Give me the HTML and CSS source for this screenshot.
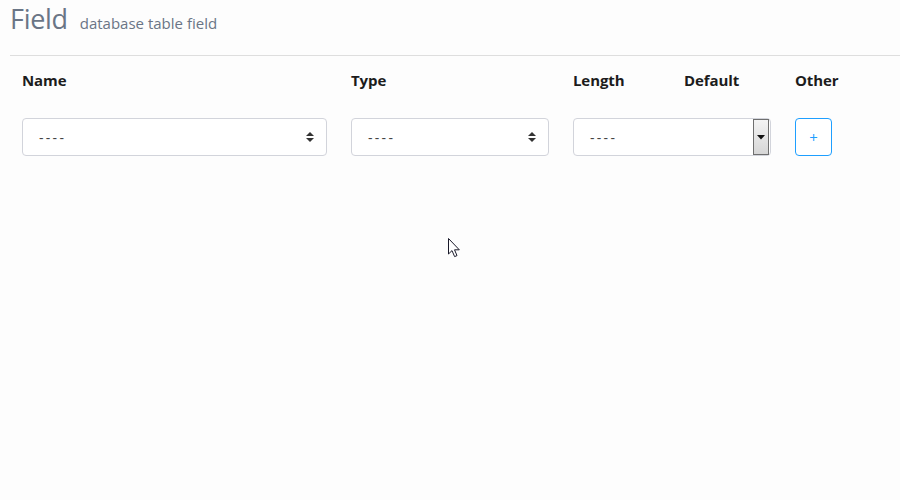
FILE: index.html
```html
<!DOCTYPE html>
<html>
<head>
<meta charset="utf-8">
<link rel="stylesheet" href="styles.css">
</head>
<body>
<div class="page">
  <div class="heading">
    <h1 class="title">Field</h1>
    <span class="subtitle">database table field</span>
  </div>
  <div class="fields">
    <div class="col-head">Name</div>
    <div class="col-head">Type</div>
    <div class="col-head">Length</div>
    <div class="col-head">Default</div>
    <div class="col-head">Other</div>

    <div class="select">
      <span class="select-text">----</span>
      <svg class="updown" width="8" height="12" viewBox="0 0 8 12"><path d="M4 1 L8 5 H0 Z M0 7 H8 L4 11 Z" fill="#333"/></svg>
    </div>
    <div class="select">
      <span class="select-text">----</span>
      <svg class="updown" width="8" height="12" viewBox="0 0 8 12"><path d="M4 1 L8 5 H0 Z M0 7 H8 L4 11 Z" fill="#333"/></svg>
    </div>
    <div class="select select-wide">
      <span class="select-text">----</span>
      <span class="dropbtn"><svg width="8" height="5" viewBox="0 0 8 5"><path d="M0 0 H8 L4 4.5 Z" fill="#111"/></svg></span>
    </div>
    <div class="add-cell"><button class="add-btn">+</button></div>
  </div>
</div>
<svg class="cursor" width="13" height="20" viewBox="0 0 13 20"><path d="M0.5 0.5 V16 L4 12.6 L6.6 18.6 L9 17.6 L6.5 11.8 H11.3 Z" fill="#fff" stroke="#1a1a2a" stroke-width="1" stroke-linejoin="round"/></svg>
</body>
</html>
```

FILE: styles.css
```css
html, body {
  margin: 0;
  padding: 0;
  background: #fdfdfd;
}
body {
  font-family: "Open Sans", "Noto Sans", "Liberation Sans", sans-serif;
  color: #222;
  width: 900px;
  height: 500px;
  overflow: hidden;
  position: relative;
}
.page {
  padding-left: 10px;
}
.heading {
  display: flex;
  align-items: baseline;
  gap: 12px;
  height: 56px;
  box-sizing: border-box;
  padding-top: 5px;
  border-bottom: 1px solid #dedede;
}
.title {
  margin: 0;
  font-size: 27px;
  line-height: 27px;
  font-weight: 400;
  color: #6a7586;
  letter-spacing: -0.3px;
}
.subtitle {
  font-size: 15px;
  color: #6a7586;
}
.fields {
  display: grid;
  grid-template-columns: 305px 198px 87px 87px 37px;
  column-gap: 24px;
  row-gap: 28px;
  padding: 14px 0 0 12px;
}
.col-head {
  font-size: 15px;
  line-height: 20px;
  font-weight: 700;
  color: #1c1c1c;
  letter-spacing: -0.1px;
}
.select {
  height: 38px;
  box-sizing: border-box;
  border: 1px solid #d2d4db;
  border-radius: 4px;
  background: #fff;
  display: flex;
  align-items: center;
  justify-content: space-between;
  padding: 0 12px 0 16px;
}
.select-text {
  font-size: 14px;
  color: #444;
  letter-spacing: 2.3px;
}
.select-wide {
  grid-column: span 2;
  padding-right: 0;
  padding-top: 0;
  padding-bottom: 0;
  align-items: stretch;
}
.select-wide .select-text {
  align-self: center;
}
.dropbtn {
  width: 16px;
  margin: 0 1px 0 0;
  box-sizing: border-box;
  border: 1px solid #6f6f6f;
  background: linear-gradient(#f4f4f4, #d6d6d6);
  display: flex;
  align-items: center;
  justify-content: center;
}
.add-btn {
  width: 37px;
  height: 38px;
  box-sizing: border-box;
  border: 1px solid #1e9fff;
  border-radius: 4px;
  background: #fff;
  color: #1e9fff;
  font-family: "Open Sans", sans-serif;
  font-size: 15px;
  padding: 0;
  line-height: 1;
}
.cursor {
  position: absolute;
  left: 448px;
  top: 238px;
}
```
